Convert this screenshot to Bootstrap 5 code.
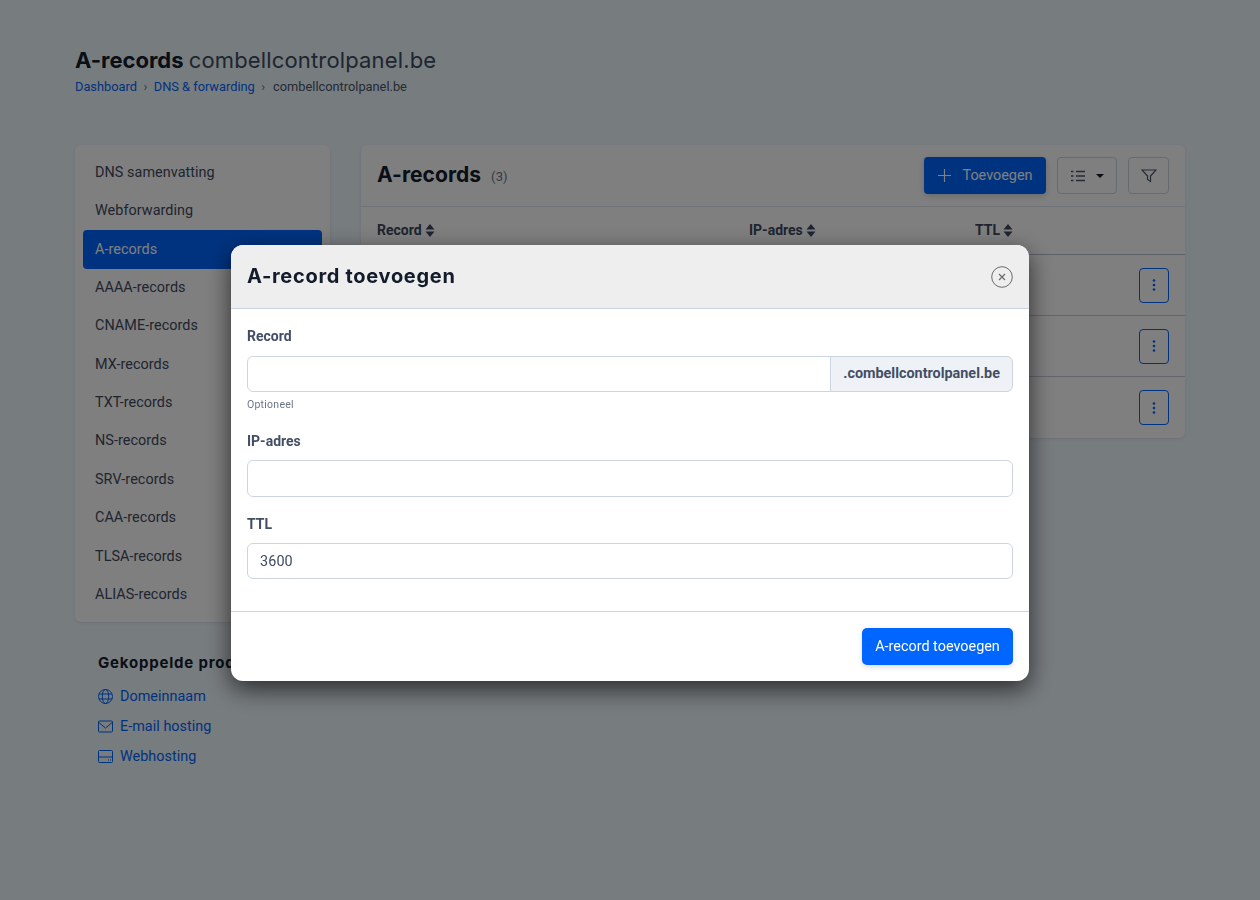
<!DOCTYPE html>
<html lang="nl">
<head>
<meta charset="utf-8">
<title>A-records</title>
<link rel="stylesheet" href="https://cdn.jsdelivr.net/npm/bootstrap@5.3.0/dist/css/bootstrap.min.css">
<style>
body{background:#eff8ff;font-family:Roboto,"Liberation Sans",sans-serif;font-size:14.4px;color:#3e4a60;min-height:900px}
a{color:#06f;text-decoration:none}
.page-wrap{width:1110px;margin:0 auto;padding-top:46px}
.head-font{font-family:Inter,"Liberation Sans",sans-serif;font-weight:700;color:#141c2c}
.page-title{font-size:22px;line-height:28px;margin:0 0 4px;letter-spacing:0}
.page-title span{font-weight:400;color:#3e4a60;letter-spacing:.15px}
.crumbs{font-size:12.8px;line-height:18px;display:flex;gap:6.5px;margin-bottom:49px;color:#4a566c}
.crumbs i{font-style:normal;color:#6b768a}
.crumb-last{margin-left:1.5px}
.layout{display:grid;grid-template-columns:255px 824px;column-gap:31px;align-items:start}
.side-box{background:#fff;border-radius:6px;padding:8.4px 8px 8px;box-shadow:0 1px 3px rgba(20,28,44,.1)}
.side-item{display:block;padding:8.4px 12px;line-height:21.6px;color:#3e4a60;border-radius:4px;letter-spacing:.05px}
.side-item.active-item{background:#06f;color:#fff}
.linked{padding:32.6px 23px 0}
.linked h6{font-size:15px;line-height:18px;margin:0 0 9px;letter-spacing:.8px}
.linked a{display:flex;align-items:center;gap:7px;height:30px;letter-spacing:.03px}
.main-box{background:#fff;border-radius:6px;box-shadow:0 1px 3px rgba(20,28,44,.1);height:293px}
.main-head{height:62px;padding:12px 16px 0;display:flex;align-items:flex-start;border-bottom:1px solid #dfe5ee}
.main-head h2{font-size:21px;line-height:36px;margin:0;letter-spacing:.05px}
.count{font-size:13px;color:#6b768a;margin:10px 0 0 10px;letter-spacing:.1px}
.btn-add{background:#06f;color:#fff;width:122px;height:37px;border-radius:4px;border:0;display:flex;align-items:center;justify-content:center;gap:12px;font-size:14.4px;margin-left:auto;box-shadow:0 2px 6px rgba(20,28,44,.2)}
.btn-tool{height:37px;border:1px solid #cdd5e3;border-radius:4px;background:#fff;display:flex;align-items:center;justify-content:center;padding:0;margin-left:11px}
.tool-list{width:60px}
.tool-filter{width:41px}
.thead-row{height:48px;display:flex;align-items:center;font-weight:700;font-size:14px;color:#3e4a60;border-bottom:1px solid #b8c0ce;padding-left:16px}
.thead-row span{display:flex;align-items:center;gap:3px}
.col-record{width:372px}
.col-ip{width:226px}
.trow{height:61px;border-bottom:1px solid #c6cdd9;display:flex;align-items:center;justify-content:flex-end;padding-right:16px}
.trow:last-child{border:0}
.btn-dots{width:30px;height:35px;border:1px solid #06f;border-radius:4px;background:#fff;display:flex;align-items:center;justify-content:center;padding:0}
.modal-pane{width:798px;margin:245px auto 0;background:#fff;border-radius:12px;overflow:hidden;box-shadow:0 8px 24px rgba(0,0,0,.65)}
.pane-head{background:#eee;height:64px;border-bottom:1px solid #cdd5e3;padding:0 16px;display:flex;align-items:center;justify-content:space-between}
.pane-head h5{font-size:20px;margin:0 0 1px;letter-spacing:.7px}
.pane-body{padding:18px 16px 0;height:303px;border-bottom:1px solid #cdd5e3}
.fld-label{display:block;font-weight:700;font-size:14px;line-height:18px;margin-bottom:10px;color:#434e64}
.label-first{margin-bottom:11px}
.label-ip{margin-top:20px}
.label-ttl{margin-top:18px}
.fld-input{height:36px;border:1px solid #cdd5e3;border-radius:6px;font-size:14.4px;color:#3e4a60;padding:0 12px;box-shadow:none;letter-spacing:.1px}
.input-tall{height:37px}
.fld-addon{background:#eef2f7;border:1px solid #cdd5e3;border-radius:0 6px 6px 0;font-weight:700;font-size:14.4px;color:#434e64;padding:0 12px;height:36px}
.fld-hint{font-size:10.5px;line-height:14px;color:#6b768a;margin-top:6px;letter-spacing:.25px}
.pane-foot{height:69px;padding:16px;display:flex;justify-content:flex-end;align-items:flex-start}
.btn-submit{background:#06f;color:#fff;border:0;border-radius:5px;height:37px;width:151px;font-size:14.4px;padding:0;box-shadow:0 2px 5px rgba(20,28,44,.15)}
.btn-submit:hover{background:#06f;color:#fff}
</style>
</head>
<body>
<div class="page-wrap">
  <h1 class="page-title head-font">A-records <span>combellcontrolpanel.be</span></h1>
  <nav class="crumbs"><a href="#">Dashboard</a><i>›</i><a href="#">DNS &amp; forwarding</a><i>›</i><span class="crumb-last">combellcontrolpanel.be</span></nav>
  <div class="layout">
    <aside>
      <div class="side-box">
        <a class="side-item" href="#">DNS samenvatting</a>
        <a class="side-item" href="#">Webforwarding</a>
        <a class="side-item active-item" href="#">A-records</a>
        <a class="side-item" href="#">AAAA-records</a>
        <a class="side-item" href="#">CNAME-records</a>
        <a class="side-item" href="#">MX-records</a>
        <a class="side-item" href="#">TXT-records</a>
        <a class="side-item" href="#">NS-records</a>
        <a class="side-item" href="#">SRV-records</a>
        <a class="side-item" href="#">CAA-records</a>
        <a class="side-item" href="#">TLSA-records</a>
        <a class="side-item" href="#">ALIAS-records</a>
      </div>
      <div class="linked">
        <h6 class="head-font">Gekoppelde producten</h6>
        <a href="#"><svg width="15" height="15" viewBox="0 0 15 15" fill="none" stroke="#06f"><circle cx="7.5" cy="7.5" r="7"/><ellipse cx="7.5" cy="7.5" rx="3.2" ry="7"/><path d="M1 5h13M1 10h13"/></svg>Domeinnaam</a>
        <a href="#"><svg width="15" height="15" viewBox="0 0 15 15" fill="none" stroke="#06f"><rect x=".5" y="2" width="14" height="11" rx="1"/><path d="M.8 3.5 7.5 9l6.7-5.5"/></svg>E-mail hosting</a>
        <a href="#"><svg width="15" height="15" viewBox="0 0 15 15" fill="none" stroke="#06f"><rect x=".5" y="1.5" width="14" height="12" rx="1"/><path d="M.5 8h14M10 11h1M12 11h1"/></svg>Webhosting</a>
      </div>
    </aside>
    <main class="main-box">
      <div class="main-head">
        <h2 class="head-font">A-records</h2><span class="count">(3)</span>
        <button class="btn-add" type="button"><svg width="13" height="13" viewBox="0 0 13 13" stroke="#fff" stroke-width="1.2"><path d="M6.500 0v13M0 6.500h13"/></svg>Toevoegen</button>
        <button class="btn-tool tool-list" type="button"><svg width="33" height="14" viewBox="0 0 33 14"><g stroke="#4a566c" stroke-width="1.3"><path d="M5 2.500h9M5 7h9M5 11.500h9"/><path d="M0 2.500h2.500M0 7h2.500M0 11.500h2.500"/></g><path d="M25 5h8l-4 4z" fill="#141c2c"/></svg></button>
        <button class="btn-tool tool-filter" type="button"><svg width="16" height="14" viewBox="0 0 16 14" fill="none" stroke="#4a566c" stroke-width="1.2"><path d="M1 1h14L9.500 7v5.500l-3-2V7z"/></svg></button>
      </div>
      <div class="thead-row">
        <span class="col-record">Record<svg width="10" height="13" viewBox="0 0 10 13" fill="#3e4a60"><path d="M5 0l4.500 5.500h-9zM5 13L.5 7.500h9z"/></svg></span>
        <span class="col-ip">IP-adres<svg width="10" height="13" viewBox="0 0 10 13" fill="#3e4a60"><path d="M5 0l4.500 5.500h-9zM5 13L.5 7.500h9z"/></svg></span>
        <span>TTL<svg width="10" height="13" viewBox="0 0 10 13" fill="#3e4a60"><path d="M5 0l4.500 5.500h-9zM5 13L.5 7.500h9z"/></svg></span>
      </div>
      <div class="trow"><button class="btn-dots" type="button"><svg width="4" height="12" viewBox="0 0 4 12" fill="#06f"><circle cx="2" cy="1.500" r="1.300"/><circle cx="2" cy="6" r="1.300"/><circle cx="2" cy="10.500" r="1.300"/></svg></button></div>
      <div class="trow"><button class="btn-dots" type="button"><svg width="4" height="12" viewBox="0 0 4 12" fill="#06f"><circle cx="2" cy="1.500" r="1.300"/><circle cx="2" cy="6" r="1.300"/><circle cx="2" cy="10.500" r="1.300"/></svg></button></div>
      <div class="trow"><button class="btn-dots" type="button"><svg width="4" height="12" viewBox="0 0 4 12" fill="#06f"><circle cx="2" cy="1.500" r="1.300"/><circle cx="2" cy="6" r="1.300"/><circle cx="2" cy="10.500" r="1.300"/></svg></button></div>
    </main>
  </div>
</div>

<div class="modal-backdrop show"></div>
<div class="modal d-block" tabindex="-1">
  <div class="modal-pane">
    <div class="pane-head">
      <h5 class="head-font">A-record toevoegen</h5>
      <svg width="22" height="22" viewBox="0 0 22 22" fill="none" stroke="#6b6b6b"><circle cx="11" cy="11" r="10.300"/><path d="M8 8l6 6M14 8l-6 6" stroke-width="1.200"/></svg>
    </div>
    <div class="pane-body">
      <label class="fld-label label-first" for="f1">Record</label>
      <div class="input-group">
        <input id="f1" class="form-control fld-input" type="text">
        <span class="input-group-text fld-addon">.combellcontrolpanel.be</span>
      </div>
      <div class="fld-hint">Optioneel</div>
      <label class="fld-label label-ip" for="f2">IP-adres</label>
      <input id="f2" class="form-control fld-input input-tall" type="text">
      <label class="fld-label label-ttl" for="f3">TTL</label>
      <input id="f3" class="form-control fld-input" type="text" value="3600">
    </div>
    <div class="pane-foot"><button class="btn btn-submit" type="button">A-record toevoegen</button></div>
  </div>
</div>
</body>
</html>
